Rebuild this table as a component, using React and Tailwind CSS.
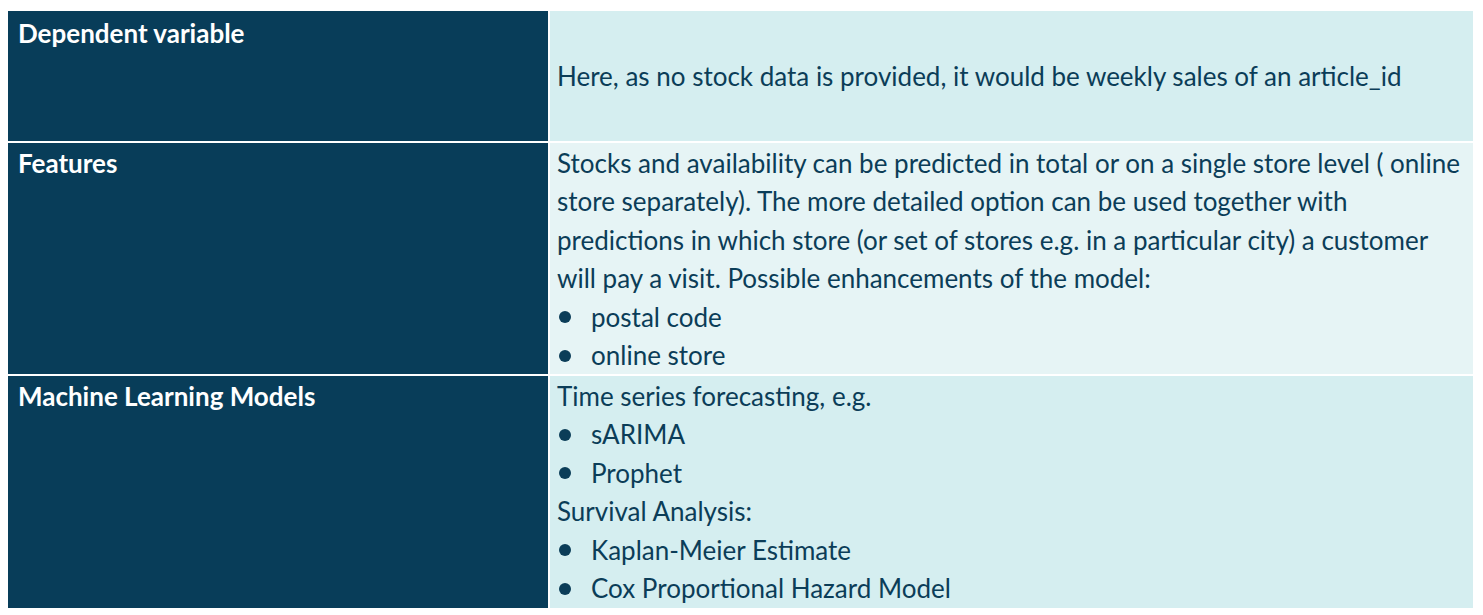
import React from "react";

const Bullet = ({ children }) => (
  <div className="flex items-center h-[38.5px] whitespace-nowrap">
    <span className="w-[12px] h-[12px] rounded-full bg-[#0b3d58] ml-[2px] mr-[20px] shrink-0" />
    <span>{children}</span>
  </div>
);

const Line = ({ children }) => <div className="h-[38.5px] flex items-center whitespace-nowrap">{children}</div>;

export default function App() {
  return (
    <div className="w-[1483px] h-[615px] bg-white pt-[11px] pl-[8px]" style={{ fontFamily: "Lato, 'Open Sans', sans-serif" }}>
      <div className="w-[1465px] grid grid-cols-[540px_1fr] gap-x-[2px] gap-y-[2px] text-[26px] text-[#0b3d58]">
        <div className="bg-[#083d59] h-[130px] px-[10px] pt-[3px] text-white font-bold">
          <Line>Dependent variable</Line>
        </div>
        <div className="bg-[#d5eef0] h-[130px] px-[7px] flex items-center whitespace-nowrap">
          Here, as no stock data is provided, it would be weekly sales of an article_id
        </div>

        <div className="bg-[#083d59] h-[231px] px-[10px] pt-[1px] text-white font-bold">
          <Line>Features</Line>
        </div>
        <div className="bg-[#e6f4f5] h-[231px] px-[7px] pt-[1px]">
          <Line>Stocks and availability can be predicted in total or on a single store level ( online</Line>
          <Line>store separately). The more detailed option can be used together with</Line>
          <Line>predictions in which store (or set of stores e.g. in a particular city) a customer</Line>
          <Line>will pay a visit. Possible enhancements of the model:</Line>
          <Bullet>postal code</Bullet>
          <Bullet>online store</Bullet>
        </div>

        <div className="bg-[#083d59] h-[232px] px-[10px] pt-[1px] text-white font-bold">
          <Line>Machine Learning Models</Line>
        </div>
        <div className="bg-[#d5eef0] h-[232px] px-[7px] pt-[1px]">
          <Line>Time series forecasting, e.g.</Line>
          <Bullet>sARIMA</Bullet>
          <Bullet>Prophet</Bullet>
          <Line>Survival Analysis:</Line>
          <Bullet>Kaplan-Meier Estimate</Bullet>
          <Bullet>Cox Proportional Hazard Model</Bullet>
        </div>
      </div>
    </div>
  );
}
